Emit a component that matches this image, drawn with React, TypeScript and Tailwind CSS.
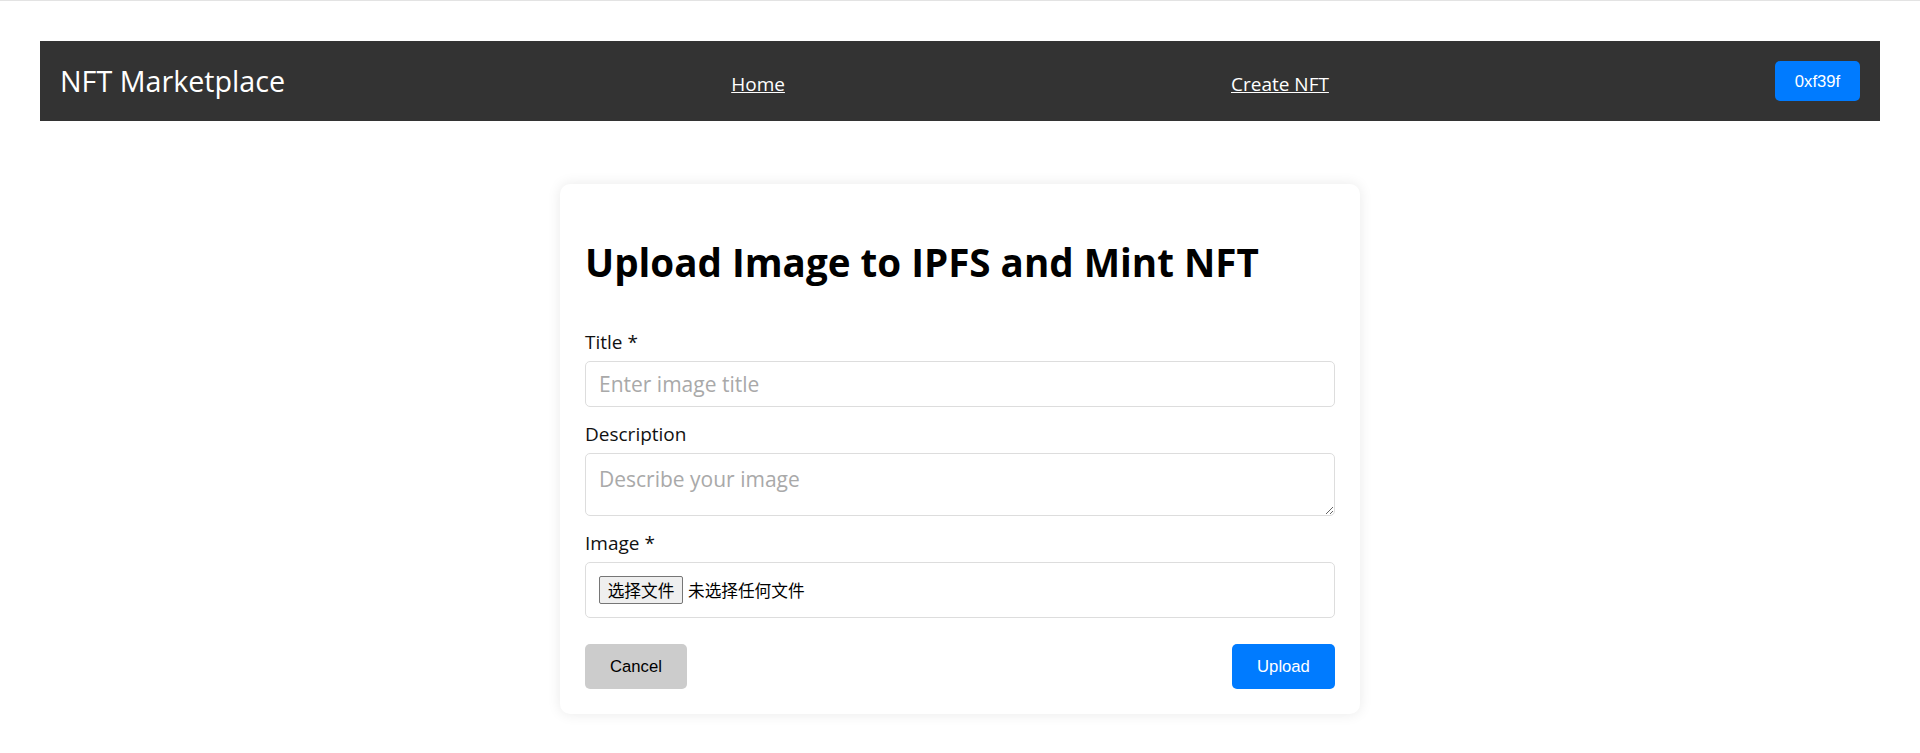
import React from "react";

export default function App() {
  return (
    <div className="min-h-[753px] bg-white border-t border-[#e3e3e3] px-[40px] pt-[40px] font-['Open_Sans',sans-serif] text-black">
      <nav className="h-[80px] bg-[#333333] px-[20px] flex items-center justify-between">
        <div className="text-[28.7px] leading-[36px] text-white">NFT Marketplace</div>
        <a href="#" className="pt-[5px] text-[19px] leading-[24px] text-white underline">Home</a>
        <a href="#" className="pt-[5px] text-[19px] leading-[24px] text-white underline">Create NFT</a>
        <button className="w-[85px] h-[40px] rounded-[5px] bg-[#007bff] text-white text-[16.67px] font-['Liberation_Sans',Arial,sans-serif]">
          0xf39f
        </button>
      </nav>

      <div className="mt-[63px] mx-auto w-[800px] rounded-[10px] bg-white p-[25px] shadow-[0_0_14px_rgba(0,0,0,0.09)]">
        <h1 className="mt-[29px] text-[38.6px] leading-[48px] font-bold text-black">
          Upload Image to IPFS and Mint NFT
        </h1>

        <div className="mt-[44px] flex flex-col gap-[15px]">
          <div className="flex flex-col gap-[7px]">
            <label className="text-[19px] leading-[24px] text-[#111]">Title *</label>
            <input
              type="text"
              placeholder="Enter image title"
              className="h-[46px] w-full rounded-[5px] border border-[#dddddd] px-[13px] text-[21px] placeholder:text-[#a9a9a9] outline-none"
            />
          </div>

          <div className="flex flex-col gap-[7px]">
            <label className="text-[19px] leading-[24px] text-[#111]">Description</label>
            <textarea
              placeholder="Describe your image"
              className="h-[63px] w-full rounded-[5px] border border-[#dddddd] px-[13px] pt-[10px] text-[21px] placeholder:text-[#a9a9a9] outline-none"
            />
          </div>

          <div className="flex flex-col gap-[7px]">
            <label className="text-[19px] leading-[24px] text-[#111]">Image *</label>
            <div className="h-[56px] w-full rounded-[5px] border border-[#dddddd] px-[13px] flex items-center">
              <span className="h-[28px] w-[84px] flex items-center justify-center rounded-[2px] border border-[#767676] bg-[#efefef] text-[16.67px] leading-[20px] text-black font-['Noto_Sans_CJK_SC',sans-serif]">
                选择文件
              </span>
              <span className="ml-[5px] text-[16.67px] leading-[20px] text-black font-['Noto_Sans_CJK_SC',sans-serif]">
                未选择任何文件
              </span>
            </div>
          </div>
        </div>

        <div className="mt-[26px] flex items-center justify-between">
          <button className="w-[102px] h-[45px] rounded-[5px] bg-[#cccccc] text-black text-[16.67px] font-['Liberation_Sans',Arial,sans-serif]">
            Cancel
          </button>
          <button className="w-[103px] h-[45px] rounded-[5px] bg-[#007bff] text-white text-[16.67px] font-['Liberation_Sans',Arial,sans-serif]">
            Upload
          </button>
        </div>
      </div>
    </div>
  );
}
